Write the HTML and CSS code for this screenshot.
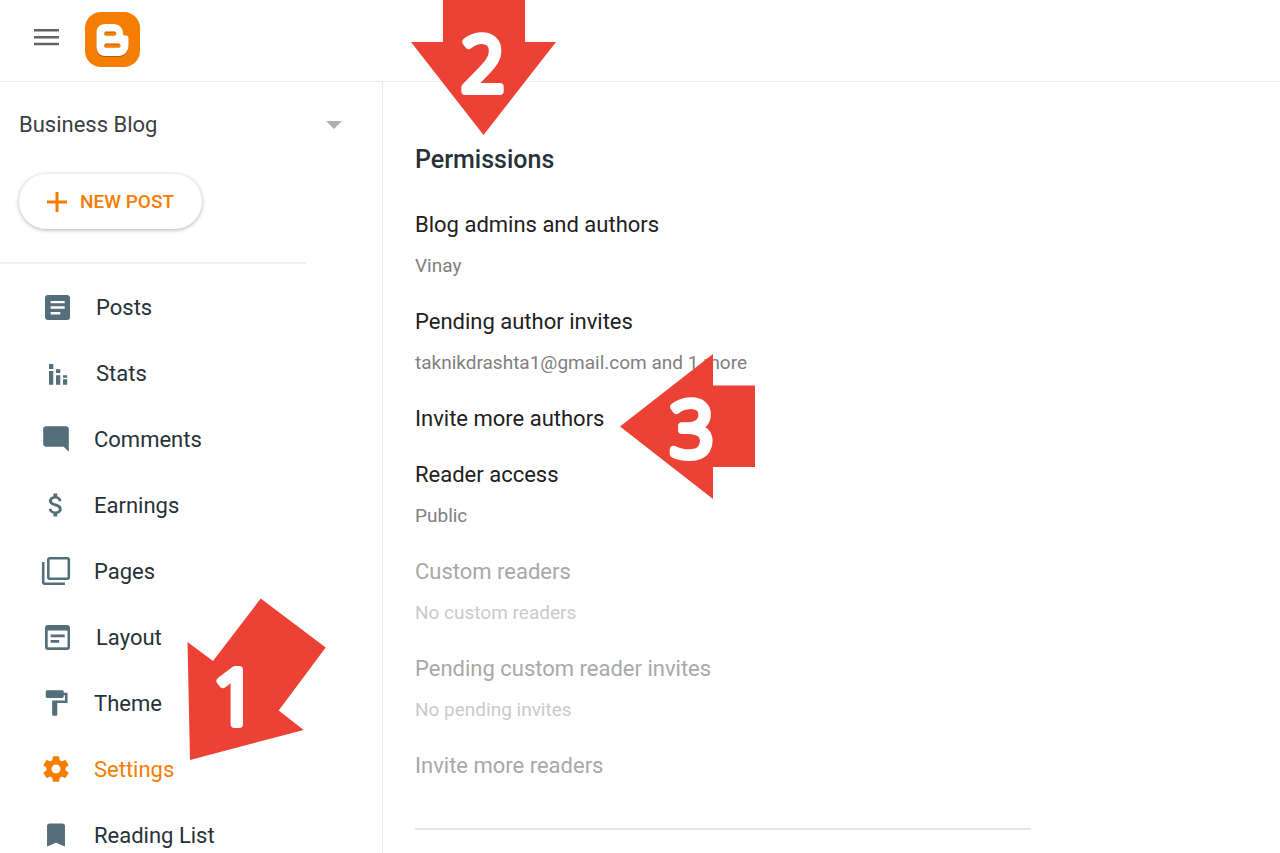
FILE: index.html
```html
<!DOCTYPE html>
<html lang="en">
<head>
    <meta charset="UTF-8">
    <meta name="viewport" content="width=device-width, initial-scale=1.0">
    <title>Blogger - Settings</title>
    <link rel="stylesheet" href="styles.css">
</head>
<body>
    <div class="app">
        <header class="topbar">
            <button class="menu-btn" aria-label="Main menu">
                <svg width="26" height="18" viewBox="0 0 26 18" fill="#5f6368">
                    <path d="M0 1h25v2.500H0zM0 8h25v2.500H0zM0 14.700h25v2.500H0z"/>
                </svg>
            </button>
            <a class="logo" href="#" aria-label="Blogger">
                <svg width="55" height="55" viewBox="0 0 55 55">
                    <rect width="55" height="55" rx="16" fill="#f57d02"/>
                    <path d="M20 13h8.500c5.500 0 9.500 4 9.500 9.200 0 1.500.8 2.400 2.200 2.400h1c1.500 0 2.300.9 2.300 2.400v7.500c0 5.700-4.300 10.500-10 10.500H20c-5 0-8.500-4-8.500-9V21.500C11.500 16.500 15 13 20 13z" fill="#b85c00"/>
                    <path d="M20 12h8.500c5.500 0 9.500 4 9.500 9.200 0 1.500.8 2.400 2.200 2.400h1c1.500 0 2.300.9 2.300 2.400v7.500c0 5.700-4.300 10.500-10 10.500H20c-5 0-8.500-4-8.500-9V20.500C11.500 15.500 15 12 20 12z" fill="#fff"/>
                    <path d="M21 21.800h8.500M21 33.800h12.700" stroke="#f57d02" stroke-width="4" stroke-linecap="round"/>
                    <path d="M20.500 20.100h9.500M20.500 32.100h13.500" stroke="#c96300" stroke-width="1" stroke-linecap="round"/>
                </svg>
            </a>
        </header>

        <div class="body">
            <aside class="sidebar">
                <div class="blog-picker">
                    <select class="blog-select" aria-label="Blog">
                        <option>Business Blog</option>
                    </select>
                    <svg class="caret" width="16" height="8" viewBox="0 0 16 8"><path d="M0 0h16L8 8z" fill="#b0b0b0"/></svg>
                </div>

                <button class="new-post">
                    <svg width="20" height="20" viewBox="0 0 20 20"><path d="M10 0v20M0 10h20" stroke="#f57d02" stroke-width="3"/></svg>
                    NEW POST
                </button>

                <nav class="nav">
                    <a href="#">
                        <svg width="34" height="34" viewBox="0 0 34 34">
                            <rect x="5" y="5" width="25" height="25" rx="3"/>
                            <path d="M10.700 11h14v2.300h-14zM10.700 16.300h14v2.400h-14zM10.700 22h9.600v2.500h-9.600z" fill="#fff"/>
                        </svg>
                        Posts
                    </a>
                    <a href="#">
                        <svg width="34" height="34" viewBox="0 0 34 34">
                            <path d="M9 8h4.300v5H9zM9 15h4.300v13.700H9zM16 13.300h4.300v3.800H16zM16 19.200h4.300v9.500H16zM23 19.200h4.200v2.600H23zM23 23.200h4.200v5.500H23z"/>
                        </svg>
                        Stats
                    </a>
                    <a href="#">
                        <svg width="32" height="32" viewBox="-0.500 -0.500 25 25">
                            <path d="M21.990 4c0-1.100-.89-2-1.990-2H4c-1.100 0-2 .9-2 2v12c0 1.100.9 2 2 2h14l4 4-.01-18z"/>
                        </svg>
                        Comments
                    </a>
                    <a href="#">
                        <svg width="32" height="32" viewBox="-0.500 -0.500 25 25">
                            <path d="M11.800 10.900c-2.270-.59-3-1.200-3-2.150 0-1.090 1.010-1.850 2.700-1.850 1.780 0 2.440.85 2.500 2.100h2.210c-.07-1.720-1.120-3.300-3.210-3.810V3h-3v2.160c-1.940.42-3.500 1.680-3.500 3.610 0 2.310 1.910 3.460 4.700 4.130 2.500.6 3 1.480 3 2.410 0 .69-.49 1.790-2.700 1.790-2.060 0-2.870-.92-2.980-2.100h-2.200c.12 2.190 1.760 3.420 3.680 3.830V21h3v-2.150c1.950-.37 3.500-1.500 3.500-3.550 0-2.840-2.430-3.810-4.700-4.400z"/>
                        </svg>
                        Earnings
                    </a>
                    <a href="#">
                        <svg width="32" height="32" viewBox="-0.500 -0.500 25 25">
                            <path d="M3 5H1v16c0 1.100.9 2 2 2h16v-2H3V5zm18-4H7c-1.100 0-2 .9-2 2v14c0 1.100.9 2 2 2h14c1.100 0 2-.9 2-2V3c0-1.100-.9-2-2-2zm0 16H7V3h14v14z"/>
                        </svg>
                        Pages
                    </a>
                    <a href="#">
                        <svg width="34" height="34" viewBox="0 0 34 34">
                            <rect x="5" y="5" width="25" height="25" rx="3"/>
                            <path d="M7.700 10.500h19.800v16.800H7.700z" fill="#fff"/>
                            <path d="M10.700 14.500h14v2.700h-14zM10.700 20h8.500v2.700h-8.500z"/>
                        </svg>
                        Layout
                    </a>
                    <a href="#">
                        <svg width="32" height="32" viewBox="-0.500 -0.500 25 25">
                            <path d="M18 4V3c0-.55-.45-1-1-1H5c-.55 0-1 .45-1 1v4c0 .55.45 1 1 1h12c.55 0 1-.45 1-1V6h1v4H9v11c0 .55.45 1 1 1h2c.55 0 1-.45 1-1v-9h8V4h-3z"/>
                        </svg>
                        Theme
                    </a>
                    <a class="active" href="#">
                        <svg width="32" height="32" viewBox="-0.500 -0.500 25 25">
                            <path d="M19.430 12.980c.04-.32.070-.64.070-.98s-.03-.66-.07-.98l2.110-1.650c.19-.15.240-.42.120-.64l-2-3.460c-.12-.22-.39-.3-.61-.22l-2.490 1c-.52-.4-1.080-.73-1.690-.98l-.38-2.650C14.460 2.180 14.250 2 14 2h-4c-.25 0-.46.180-.49.420l-.38 2.650c-.61.250-1.170.59-1.690.98l-2.490-1c-.23-.09-.49 0-.61.220l-2 3.460c-.13.220-.07.490.12.640l2.110 1.650c-.04.320-.07.650-.07.980s.03.660.07.980l-2.110 1.650c-.19.150-.24.420-.12.640l2 3.460c.12.220.39.300.61.220l2.490-1c.52.400 1.080.730 1.690.980l.38 2.650c.03.240.24.420.49.420h4c.25 0 .46-.18.490-.42l.38-2.650c.61-.25 1.170-.59 1.690-.98l2.490 1c.23.090.49 0 .61-.22l2-3.460c.12-.22.070-.49-.12-.64l-2.110-1.650zM12 15.500c-1.930 0-3.500-1.570-3.500-3.500s1.570-3.500 3.500-3.500 3.500 1.570 3.500 3.500-1.570 3.500-3.500 3.500z"/>
                        </svg>
                        Settings
                    </a>
                    <a href="#">
                        <svg width="32" height="32" viewBox="-0.500 -0.500 25 25">
                            <path d="M17 3H7c-1.100 0-1.990.9-1.990 2L5 21l7-3 7 3V5c0-1.100-.9-2-2-2z"/>
                        </svg>
                        Reading List
                    </a>
                </nav>
            </aside>

            <main class="content">
                <section class="permissions">
                    <h2>Permissions</h2>
                    <div class="setting">
                        <h3>Blog admins and authors</h3>
                        <p>Vinay</p>
                    </div>
                    <div class="setting">
                        <h3>Pending author invites</h3>
                        <p>taknikdrashta1@gmail.com and 1 more</p>
                    </div>
                    <div class="setting">
                        <h3>Invite more authors</h3>
                    </div>
                    <div class="setting">
                        <h3>Reader access</h3>
                        <p>Public</p>
                    </div>
                    <div class="setting disabled">
                        <h3>Custom readers</h3>
                        <p>No custom readers</p>
                    </div>
                    <div class="setting disabled">
                        <h3>Pending custom reader invites</h3>
                        <p>No pending invites</p>
                    </div>
                    <div class="setting disabled">
                        <h3>Invite more readers</h3>
                    </div>
                </section>
            </main>
        </div>

        <!-- Numbered step arrows -->
        <svg class="step step-1" width="140" height="164" viewBox="0 0 140 164">
            <path d="M3 162L.5 44 26 63 73.700.5 138.700 49.500 91.700 112.500 116.700 132z"/>
            <text x="48" y="126">1</text>
        </svg>
        <svg class="step step-2" width="145" height="135" viewBox="0 0 145 135">
            <path d="M32 0h82v42h31L72.500 135 0 42h32z"/>
            <text x="72" y="91">2</text>
        </svg>
        <svg class="step step-3" width="135" height="145" viewBox="0 0 135 145">
            <path d="M0 72.500L93 0v31.500h42V113H93v32z"/>
            <text x="72" y="102">3</text>
        </svg>
    </div>
</body>
</html>
```
FILE: styles.css
```css
* {
    box-sizing: border-box;
}

body {
    margin: 0;
    background: #fff;
    color: #263238;
    font-family: Roboto, "Liberation Sans", sans-serif;
    font-size: 22px;
}

button {
    border: none;
    padding: 0;
    background: none;
    font-family: inherit;
    cursor: pointer;
}

a {
    color: inherit;
    text-decoration: none;
}

svg {
    display: block;
    flex: none;
}

.app {
    position: relative;
    display: flex;
    flex-direction: column;
    height: 100vh;
    overflow: hidden;
}

/* Top bar */
.topbar {
    display: flex;
    flex: none;
    gap: 25px;
    padding: 12px 34px 14px;
    border-bottom: 1px solid #e8eaed;
}

.menu-btn {
    align-self: flex-start;
    margin-top: 16px;
}

.body {
    display: flex;
    flex: 1;
    min-height: 0;
}

/* Sidebar */
.sidebar {
    flex: none;
    width: 383px;
    border-right: 1px solid #e8eaed;
    overflow: hidden;
}

.blog-picker {
    display: flex;
    align-items: center;
    padding: 26px 40px 0 19px;
}

.blog-select {
    flex: 1;
    height: 32px;
    padding: 0;
    border: none;
    appearance: none;
    background: none;
    color: #3c4043;
    font-family: inherit;
    font-size: 22px;
}

.caret {
    margin-top: 2px;
    pointer-events: none;
}

.new-post {
    display: flex;
    align-items: center;
    gap: 13px;
    height: 55px;
    margin: 34px 0 33px 19px;
    padding: 0 28px;
    border-radius: 28px;
    background: #fff;
    box-shadow: 0 1px 4px rgba(0, 0, 0, 0.3);
    color: #f57d02;
    font-size: 19px;
    font-weight: 500;
}

.nav {
    padding-top: 10px;
}

/* Short rule above the links */
.nav::before {
    content: "";
    display: block;
    width: 80%;
    height: 2px;
    margin: -10px 0 10px;
    background: #eceff1;
}

.nav a {
    display: flex;
    align-items: center;
    gap: 22px;
    height: 66px;
    padding-left: 40px;
    fill: #546e7a;
}

.nav .active {
    color: #f57d02;
    fill: #f57d02;
}

/* Settings */
.content {
    flex: 1;
    padding: 62px 32px 0;
}

.permissions {
    display: flex;
    flex-direction: column;
    gap: 30px;
    max-width: 616px;
    padding-bottom: 49px;
    border-bottom: 2px solid #e6e6e6;
}

.permissions h2 {
    margin: 0 0 6px;
    font-size: 25px;
    font-weight: 500;
    line-height: 32px;
}

.setting h3 {
    margin: 0;
    color: #212121;
    font-size: 22px;
    font-weight: 400;
    line-height: 26px;
}

.setting p {
    margin: 15px 0 0;
    color: #808080;
    font-size: 19px;
    line-height: 26px;
}

.disabled h3 {
    color: #a8a8a8;
}

.disabled p {
    color: #cacaca;
}

/* Step arrows, drawn over the page */
.step {
    position: absolute;
    fill: #ec4235;
    pointer-events: none;
}

.step text {
    fill: #fff;
    stroke: #fff;
    stroke-width: 8px;
    stroke-linejoin: round;
    font-family: "Noto Sans", sans-serif;
    font-size: 76px;
    font-weight: 300;
    text-anchor: middle;
}

.step-1 {
    left: 187px;
    top: 598px;
}

.step-2 {
    left: 411px;
    top: 0;
}

.step-3 {
    left: 620px;
    top: 354px;
}
```
